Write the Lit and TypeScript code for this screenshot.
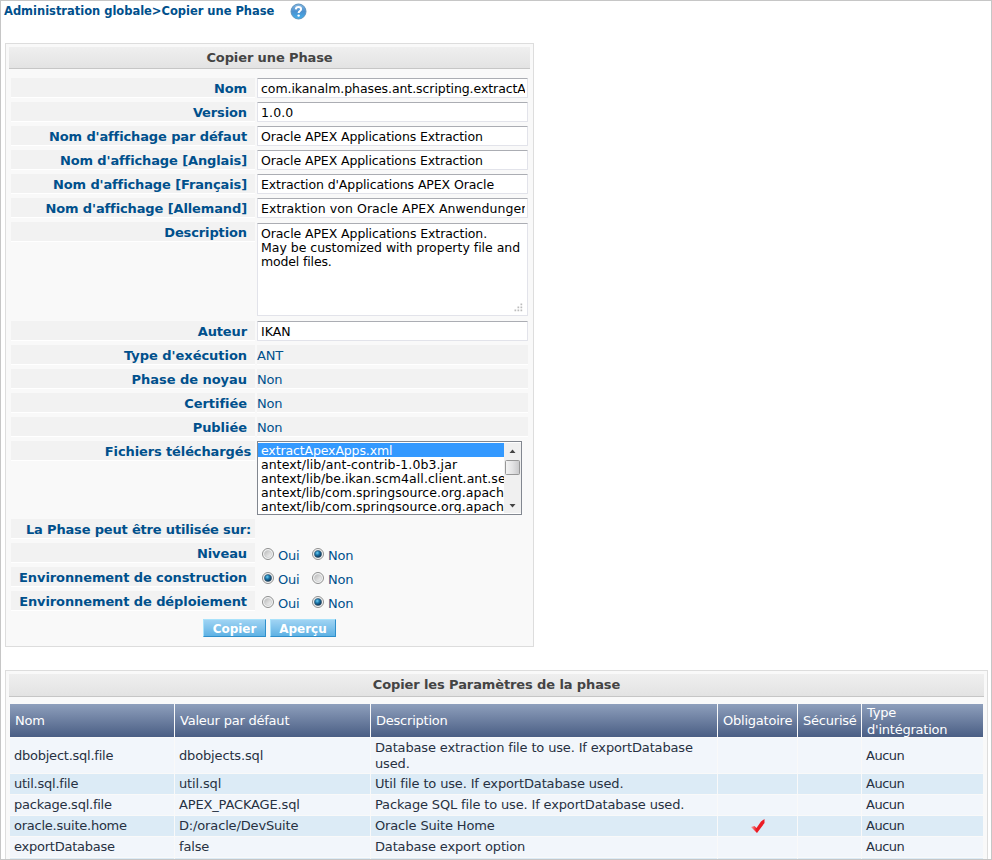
import { LitElement, html, css, nothing } from "lit";
import { customElement } from "lit/decorators.js";
import { styleMap } from "lit/directives/style-map.js";

type Row = {
  label: string;
  kind: "input" | "text" | "area" | "list" | "radio" | "none";
  value?: string;
  wide?: boolean;
  tracking?: number;
};

const rows: Row[] = [
  { label: "Nom", kind: "input", value: "com.ikanalm.phases.ant.scripting.extractA", tracking: -0.07 },
  { label: "Version", kind: "input", value: "1.0.0", tracking: 0.1 },
  { label: "Nom d'affichage par défaut", kind: "input", value: "Oracle APEX Applications Extraction", tracking: -0.1 },
  { label: "Nom d'affichage [Anglais]", kind: "input", value: "Oracle APEX Applications Extraction", tracking: -0.1 },
  { label: "Nom d'affichage [Français]", kind: "input", value: "Extraction d'Applications APEX Oracle", tracking: -0.1 },
  { label: "Nom d'affichage [Allemand]", kind: "input", value: "Extraktion von Oracle APEX Anwendungen", tracking: 0.06 },
  { label: "Description", kind: "area" },
  { label: "Auteur", kind: "input", value: "IKAN", tracking: 0.05 },
  { label: "Type d'exécution", kind: "text", value: "ANT" },
  { label: "Phase de noyau", kind: "text", value: "Non" },
  { label: "Certifiée", kind: "text", value: "Non" },
  { label: "Publiée", kind: "text", value: "Non" },
  { label: "Fichiers téléchargés", kind: "list", wide: true },
  { label: "La Phase peut être utilisée sur:", kind: "none", wide: true },
  { label: "Niveau", kind: "radio", value: "Non" },
  { label: "Environnement de construction", kind: "radio", value: "Oui" },
  { label: "Environnement de déploiement", kind: "radio", value: "Non" },
];

const description: [string, number][] = [
  ["Oracle APEX Applications Extraction.", -0.09],
  ["May be customized with property file and", -0.01],
  ["model files.", -0.15],
];

const files: [string, number][] = [
  ["extractApexApps.xml", -0.12],
  ["antext/lib/ant-contrib-1.0b3.jar", 0.1],
  ["antext/lib/be.ikan.scm4all.client.ant.se", 0.06],
  ["antext/lib/com.springsource.org.apach", 0.05],
  ["antext/lib/com.springsource.org.apach", 0.05],
];

const params = [
  ["dbobject.sql.file", "dbobjects.sql", "Database extraction file to use. If exportDatabase used."],
  ["util.sql.file", "util.sql", "Util file to use. If exportDatabase used."],
  ["package.sql.file", "APEX_PACKAGE.sql", "Package SQL file to use. If exportDatabase used."],
  ["oracle.suite.home", "D:/oracle/DevSuite", "Oracle Suite Home"],
  ["exportDatabase", "false", "Database export option"],
  ["", "", ""],
];

const spaced = (n = 0) => styleMap({ letterSpacing: `${n}px` });

@customElement("app-root")
export class AppRoot extends LitElement {
  static styles = css`
    :host {
      display: block;
      box-sizing: border-box;
      width: 992px;
      height: 860px;
      overflow: hidden;
      border: 1px solid #c6c6c6;
      background: #fff;
      font: 13px/16px Verdana, "DejaVu Sans", sans-serif;
      color: #000;
    }
    * { box-sizing: border-box; }
    .crumb { display: flex; height: 42px; padding: 1px 0 0 3px; gap: 15px; font-weight: bold; font-size: 11.5px; line-height: 19px; color: #00508c; }
    .crumb span { display: block; width: 271px; white-space: nowrap; letter-spacing: -0.02px; }
    .crumb svg { display: block; margin-top: 1px; }
    .panel { margin-left: 4px; border: 1px solid #ddd; background: #f9f9f9; padding: 3px; }
    .form { width: 529px; height: 604px; }
    .params { width: 983px; height: 230px; margin-top: 23px; }
    .title {
      height: 23px; line-height: 21px; text-align: center; font-weight: bold; font-size: 13px; color: #444;
      letter-spacing: -0.11px; background: linear-gradient(#efefef, #e3e3e3); border-bottom: 1px solid #c6c6c6; white-space: nowrap;
    }
    .form .title { width: 521px; height: 22px; margin-bottom: 9px; }
    .row { display: grid; grid-template-columns: 244px 271px; column-gap: 2px; height: 24px; margin-left: 2px; }
    .row-area { height: 99px; }
    .row-list { height: 78px; }
    .label {
      height: 20px; background: #f2f2f2; border-bottom: 1px solid #fff; text-align: right; padding-right: 8px;
      font-weight: bold; line-height: 21px; letter-spacing: -0.12px; color: #00508c; white-space: nowrap;
    }
    .label.wide { padding-right: 4px; }
    .row-none .label { letter-spacing: -0.17px; }
    .row-radio .label { letter-spacing: -0.1px; }
    .row-text .label { letter-spacing: -0.04px; }
    .input {
      height: 20px; border: 1px solid #e2e3ea; border-top-color: #abadb3; border-radius: 1px; background: #fff;
      font-size: 12.5px; line-height: 19px; padding: 0 2px 0 3px; white-space: nowrap;
    }
    .clip { display: block; overflow: hidden; height: 18px; }
    .ro { height: 20px; background: #f2f2f2; border-bottom: 1px solid #fff; line-height: 21px; letter-spacing: -0.2px; color: #00508c; }
    .textarea {
      position: relative; height: 93px; margin-top: 1px; border: 1px solid #e2e3ea; border-top-color: #abadb3; background: #fff;
      padding: 3px; font-size: 12.5px; line-height: 14px; white-space: nowrap;
    }
    .grip { position: absolute; right: 4px; bottom: 3px; }
    .select { display: flex; width: 265px; height: 74px; border: 1px solid #828790; background: #fff; padding: 1px 0; font-size: 12.5px; }
    .options { flex: 1; min-width: 0; overflow: hidden; }
    .option { height: 14px; line-height: 15px; padding-left: 3px; white-space: nowrap; }
    .option.on { background: #39f; color: #fff; }
    .scroll { width: 17px; background: #f0f0f0; flex: none; }
    .scroll svg { display: block; }
    .radios { display: flex; align-items: flex-start; padding: 4px 0 0 4px; color: #00508c; letter-spacing: -0.2px; }
    .radios svg { margin-right: 4px; flex: none; }
    .radios span { line-height: 17px; width: 33px; }
    .buttons { display: flex; gap: 4px; padding: 4px 0 0 194px; }
    .btn {
      height: 18px; width: 63px; text-align: center; font-weight: bold; font-size: 12px; line-height: 18px; color: #fff; letter-spacing: -0.05px;
      background: linear-gradient(#9fd3f3, #5fb2e4); border: 1px solid #a9e2fb; border-right-color: #2f8fcb; border-bottom-color: #2f8fcb;
    }
    .btn.b2 { width: 66px; }
    .params .title { width: 975px; margin-bottom: 7px; }
    .table { display: grid; grid-template-columns: 164px 195px 346px 79px 63px 121px; gap: 1px; margin-left: 1px; }
    .th {
      height: 33px; display: flex; align-items: center; padding-left: 5px; color: #fff; line-height: 17px; letter-spacing: -0.22px;
      background: linear-gradient(#8e9fbc, #4a5e84);
    }
    .th:last-of-type, .th.last { padding-right: 20px; }
    .td {
      height: 20px; padding: 0 12px 0 4px; line-height: 16px; letter-spacing: -0.15px; color: #273142; background: #f2f6fb;
      display: flex; align-items: center;
    }
    .td.tall { height: 35px; }
    .td.blue { background: #dcebf6; }
    .td.mid { justify-content: center; padding: 0; }
    .td.type { letter-spacing: -0.5px; }
    .td.key { letter-spacing: -0.24px; }
  `;

  choice(on: boolean) {
    return html`<svg width="13" height="14" viewBox="0 0 13 14">
      <defs>
        <linearGradient id="g" x1="0" y1="0" x2="1" y2="1"><stop offset="0" stop-color="#b9b9b9"/><stop offset="1" stop-color="#f8f8f8"/></linearGradient>
        <radialGradient id="d" cx=".4" cy=".35" r=".65"><stop offset="0" stop-color="#6fd0f4"/><stop offset=".45" stop-color="#1a76aa"/><stop offset="1" stop-color="#0b2e4e"/></radialGradient>
      </defs>
      <circle cx="7" cy="7" r="5.5" fill="#f4f4f4" stroke="#8e8f8f"/>
      <circle cx="7" cy="7" r="3.6" fill=${on ? "url(#d)" : "url(#g)"} stroke=${on ? "#3c5a70" : "#c4c7c9"} stroke-width=".6"/>
    </svg>`;
  }

  field(r: Row) {
    switch (r.kind) {
      case "input":
        return html`<div class="input"><span class="clip" style=${spaced(r.tracking)}>${r.value}</span></div>`;
      case "text":
        return html`<div class="ro">${r.value}</div>`;
      case "area":
        return html`<div class="textarea">
          ${description.map(([t, n]) => html`<div style=${spaced(n)}>${t}</div>`)}
          <svg class="grip" width="9" height="9" viewBox="0 0 9 9" fill="#bcbcbc"><path d="M6.500 .5h1.700v1.700h-1.700zM3.500 3.500h1.700v1.700h-1.700zM6.500 3.500h1.700v1.700h-1.700zM.5 6.500h1.700v1.700h-1.700zM3.500 6.500h1.700v1.700h-1.700zM6.500 6.500h1.700v1.700h-1.700z"/></svg>
        </div>`;
      case "list":
        return html`<div class="select">
          <div class="options">${files.map(([f, n], i) => html`<div class="option ${i ? "" : "on"}" style=${spaced(n)}>${f}</div>`)}</div>
          <div class="scroll"><svg width="17" height="70" viewBox="0 0 17 70">
            <defs><linearGradient id="t"><stop offset="0" stop-color="#f5f5f5"/><stop offset=".5" stop-color="#e3e3e4"/><stop offset="1" stop-color="#c8c8ca"/></linearGradient></defs>
            <path d="M5.500 10L8.500 6.500L11.500 10zM5.500 61H11.500L8.500 64.500z" fill="#444"/>
            <rect x="1.500" y="17.500" width="14" height="14" rx="1" fill="url(#t)" stroke="#979797"/>
          </svg></div>
        </div>`;
      case "radio":
        return html`<div class="radios">${this.choice(r.value === "Oui")}<span>Oui</span>${this.choice(r.value === "Non")}<span>Non</span></div>`;
      default:
        return html`<div></div>`;
    }
  }

  render() {
    const heads = ["Nom", "Valeur par défaut", "Description", "Obligatoire", "Sécurisé", "Type d'intégration"];
    return html`
      <div class="crumb">
        <span>Administration globale&gt;Copier une Phase</span>
        <svg width="17" height="17" viewBox="0 0 17 17">
          <defs><linearGradient id="h" x1="0" y1="0" x2="0" y2="1"><stop offset="0" stop-color="#86b9e4"/><stop offset=".5" stop-color="#4b90cf"/><stop offset="1" stop-color="#43b0ec"/></linearGradient></defs>
          <circle cx="8.500" cy="8.500" r="7.500" fill="url(#h)" stroke="#5f93bd"/>
          <path d="M5.800 6.400Q5.900 4 8.500 4T11.100 6.200C11.100 8 8.600 8 8.600 10" fill="none" stroke="#fff" stroke-width="2"/>
          <circle cx="8.600" cy="12.600" r="1.200" fill="#fff"/>
        </svg>
      </div>
      <div class="panel form">
        <div class="title">Copier une Phase</div>
        ${rows.map((r) => html`<div class="row row-${r.kind}"><div class="label ${r.wide ? "wide" : ""}">${r.label}</div>${this.field(r)}</div>`)}
        <div class="buttons"><div class="btn">Copier</div><div class="btn b2">Aperçu</div></div>
      </div>
      <div class="panel params">
        <div class="title">Copier les Paramètres de la phase</div>
        <div class="table">
          ${heads.map((t, i) => html`<div class="th ${i === heads.length - 1 ? "last" : ""}">${t}</div>`)}
          ${params.map((p, i) => {
            const c = `td ${i === 0 ? "tall" : ""} ${i % 2 ? "blue" : ""}`;
            return html`
              <div class="${c} key">${p[0]}</div><div class=${c}>${p[1]}</div><div class=${c}>${p[2]}</div>
              <div class="${c} mid">${i === 3
                ? html`<svg width="16" height="16" viewBox="0 0 16 16">
                    <defs><linearGradient id="k"><stop offset="0" stop-color="#f7a3a3"/><stop offset=".4" stop-color="#ec1c24"/></linearGradient></defs>
                    <path d="M1 9L4.500 8L6.500 10L11 3.500L14.500 1V5L7 15z" fill="url(#k)"/>
                  </svg>`
                : nothing}</div>
              <div class=${c}></div><div class="${c} type">${p[0] ? "Aucun" : ""}</div>`;
          })}
        </div>
      </div>`;
  }
}
